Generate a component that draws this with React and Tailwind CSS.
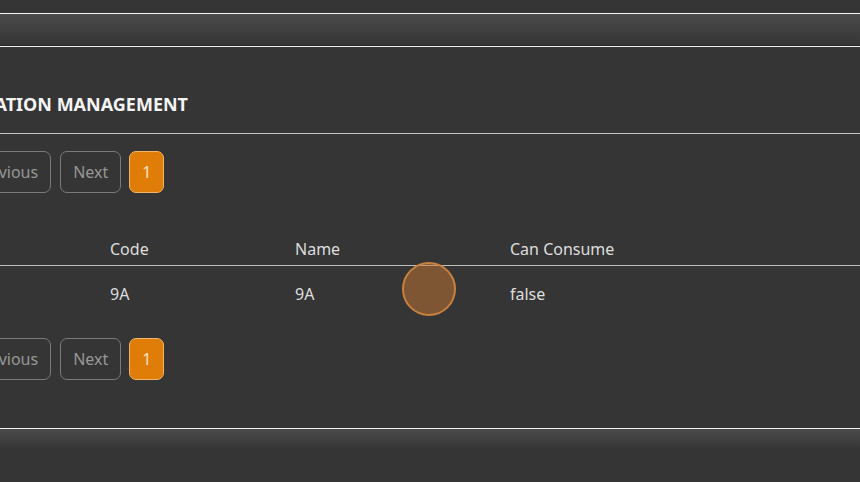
export default function App() {
  const font = { fontFamily: '"Noto Sans", "Open Sans", sans-serif' };
  const Pager = () => (
    <div className="flex items-center -ml-[39px] h-[42px]">
      <div className="h-[42px] px-[12px] flex items-center rounded-[7px] border border-[#7a7a7a] text-[#979797] text-[16px]">Previous</div>
      <div className="ml-[9px] h-[42px] px-[12px] flex items-center rounded-[7px] border border-[#7a7a7a] text-[#979797] text-[16px]">Next</div>
      <div className="ml-[8px] h-[42px] w-[35px] flex items-center justify-center rounded-[7px] border border-[#f3b469] bg-[#df7d08] text-[#fbe3c4] text-[16px]">1</div>
    </div>
  );
  return (
    <div className="relative w-[860px] h-[482px] overflow-hidden bg-[#353535]" style={font}>
      <div className="h-[13px]" />
      <div className="h-px bg-[#f2f2f2]" />
      <div className="h-[31px] bg-gradient-to-b from-[#4b4b4b] to-[#353535]" />
      <div className="h-px bg-[#262626]" />
      <div className="h-px bg-[#f2f2f2]" />
      <div className="h-[87px] flex items-end pb-[17px] border-b border-[#c4c4c4]">
        <div className="-ml-[41px] text-[18px] leading-[24px] font-bold text-[#f4f4f4]">LOCATION MANAGEMENT</div>
      </div>
      <div className="mt-[17px]"><Pager /></div>
      <div className="mt-[39px] h-[34px] border-b border-[#bdbdbd] grid grid-cols-[110px_185px_215px_1fr] items-center text-[16px] text-[#dedede]">
        <div />
        <div>Code</div>
        <div>Name</div>
        <div>Can Consume</div>
      </div>
      <div className="h-[55px] grid grid-cols-[110px_185px_215px_1fr] items-center text-[16px] text-[#dedede]">
        <div />
        <div>9A</div>
        <div>9A</div>
        <div>false</div>
      </div>
      <div className="mt-[17px]"><Pager /></div>
      <div className="mt-[48px] h-px bg-[#f2f2f2]" />
      <div className="h-[20px] bg-gradient-to-b from-[#4b4b4b] to-[#353535]" />
      <div className="absolute left-[402px] top-[262px] w-[54px] h-[54px] rounded-full bg-[rgba(200,120,50,0.5)] border-2 border-[#c8813e]" />
    </div>
  );
}
